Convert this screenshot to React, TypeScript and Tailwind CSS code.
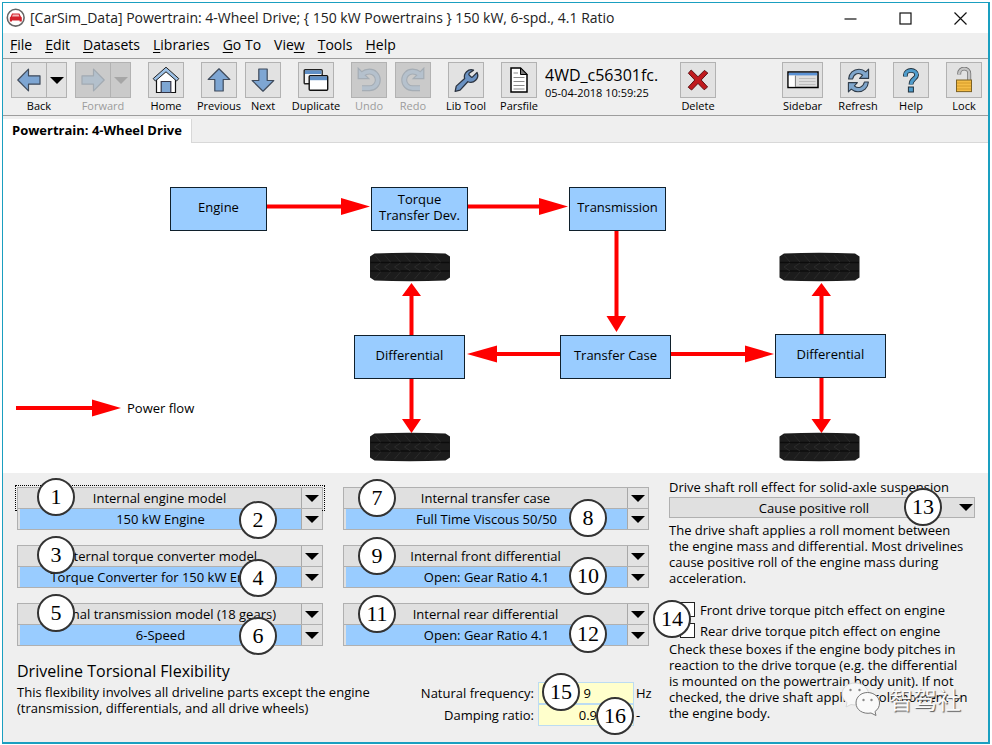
import type { ReactNode } from "react";

const SANS = 'font-["Open_Sans","Noto_Sans",sans-serif]';

const BLUE = "#7ea6d3";
const INK = "#2b3340";

/* ---------- toolbar icons ---------- */

function ArrowIcon({ turn, faded }: { turn: number; faded?: boolean }) {
  return (
    <svg width="24" height="24" viewBox="0 0 24 24" aria-hidden="true">
      <path
        d="M0.8 12 L11.5 1.2 V7.8 H23 V16.2 H11.5 V22.8 Z"
        transform={`rotate(${turn} 12 12)`}
        fill={faded ? "#b3c0cc" : BLUE}
        stroke={faded ? "#a2aab2" : "#3f4b5c"}
        strokeWidth="1.2"
        strokeLinejoin="round"
      />
    </svg>
  );
}

function Triangle({ color = "#000000" }: { color?: string }) {
  return (
    <svg width="14" height="7" viewBox="0 0 14 7" aria-hidden="true">
      <path d="M0 0 H14 L7 7 Z" fill={color} />
    </svg>
  );
}

function HomeIcon() {
  return (
    <svg width="28" height="28" viewBox="0 0 28 28" aria-hidden="true">
      <path d="M4.5 13 V26.5 H23.5 V13 L14 4.5 Z" fill="#fff" stroke="#111" strokeWidth="1.2" />
      <path d="M9.2 26.5 V15.5 H18.8 V26.5 Z" fill={BLUE} stroke="#334" strokeWidth="1.2" />
      <path
        d="M14 1.2 L1.2 12.6 L3.4 15 L14 5.8 L24.6 15 L26.8 12.6 Z"
        fill="#9dc1e6"
        stroke="#222"
        strokeWidth="1"
        strokeLinejoin="round"
      />
    </svg>
  );
}

function DuplicateIcon() {
  return (
    <svg width="26" height="24" viewBox="0 0 26 24" aria-hidden="true">
      <rect x="1.2" y="1.8" width="18" height="14" rx="1" fill="#f4f4f4" stroke="#222" strokeWidth="1.4" />
      <rect x="2" y="2.4" width="16.5" height="3.6" fill="#5f8fc6" />
      <rect x="6.2" y="7.8" width="18.5" height="14.4" rx="1" fill="#fff" stroke="#111" strokeWidth="1.4" />
      <rect x="7" y="8.4" width="17" height="3.8" fill="#5f8fc6" />
    </svg>
  );
}

function TurnIcon({ mirrored }: { mirrored?: boolean }) {
  const arc = "M6.5 7 Q9.5 4.6 13.5 4.6 A8.3 8.3 0 0 1 13.5 21.2 H6";
  return (
    <svg width="26" height="26" viewBox="0 0 26 26" aria-hidden="true">
      <g transform={mirrored ? "translate(26 0) scale(-1 1)" : undefined}>
        <path d={arc} fill="none" stroke="#a5adb5" strokeWidth="6" />
        <path d="M2.2 1.2 V11.6 H12.8 Z" fill="#b5c1cd" stroke="#a5adb5" strokeWidth="1.2" />
        <path d={arc} fill="none" stroke="#b5c1cd" strokeWidth="3.8" />
      </g>
    </svg>
  );
}

function WrenchIcon() {
  return (
    <svg width="28" height="28" viewBox="0 0 24 24" aria-hidden="true">
      <path
        d="M14.7 6.3a1 1 0 0 0 0 1.4l1.6 1.6a1 1 0 0 0 1.4 0l3.77-3.77a6 6 0 0 1-7.94 7.94l-6.6 7.2 -4.2 1 0.9-4.4 7.2-6.5a6 6 0 0 1 7.64-7.24z"
        fill="#6b92c2"
        stroke={INK}
        strokeWidth="1.1"
        strokeLinejoin="round"
      />
    </svg>
  );
}

function FileIcon() {
  return (
    <svg width="18" height="26" viewBox="0 0 18 26" aria-hidden="true">
      <path d="M1 1 H10.5 L17 7.5 V25 H1 Z" fill="#fff" stroke="#000" strokeWidth="1.5" />
      <path d="M10.5 1 L17 7.5 H10.5 Z" fill="#777" stroke="#000" />
      <path d="M3.5 6 H8 M3.5 10.5 H14.5 M3.5 14.5 H14.5 M3.5 18.5 H14.5 M3.5 22 H14.5" stroke="#8b8b8b" />
    </svg>
  );
}

function DeleteIcon() {
  return (
    <svg width="22" height="22" viewBox="0 0 22 22" aria-hidden="true">
      <path
        d="M4.2 1 L11 7.8 L17.4 1.4 L20.8 4 L14.2 11 L20.6 18 L17.2 20.8 L11 14.4 L4.6 21 L1.2 18.2 L7.8 11 L1.4 4.2 Z"
        fill="#c01a1e"
        stroke="#5c1214"
        strokeWidth="1"
        strokeLinejoin="round"
      />
    </svg>
  );
}

function SidebarIcon() {
  return (
    <svg width="32" height="18" viewBox="0 0 32 18" aria-hidden="true">
      <rect x="1" y="1" width="30" height="15.5" fill="#dedede" stroke="#000" strokeWidth="1.5" />
      <rect x="1.8" y="1.8" width="28.4" height="2.6" fill="#5a92d6" />
      <rect x="1.8" y="4.6" width="6.4" height="11" fill="#fff" />
      <path d="M8.4 4.6 V16" stroke="#777" />
      <path d="M12 7.5 H28.5 M12 10.5 H28.5 M12 13.5 H28.5" stroke="#bdbdbd" />
    </svg>
  );
}

function RefreshIcon() {
  const half = "M2.6 11 C3 5.2 7.4 1.2 13 1.2 C15.6 1.2 18 2.2 19.8 3.8 L22.6 1.2 V10.4 H13.6 L16.6 7.2 C13 3.8 7.8 5.6 6.6 11 Z";
  return (
    <svg width="25" height="25" viewBox="0 0 25 25" aria-hidden="true">
      <g fill="#7fa6cc" stroke="#2f3b48" strokeWidth="1.1" strokeLinejoin="round">
        <path d={half} />
        <path d={half} transform="rotate(180 12.5 12.5)" />
      </g>
    </svg>
  );
}

function HelpIcon() {
  const hook = "M3.4 8.4 V7 A5.6 4.6 0 0 1 14.6 7 C14.6 11 9 10.6 9 16.6";
  return (
    <svg width="18" height="25" viewBox="0 0 18 25" aria-hidden="true">
      <path d={hook} fill="none" stroke="#20303c" strokeWidth="4.8" />
      <rect x="6.4" y="19" width="5" height="5" fill="#4f9ccb" stroke="#20303c" />
      <path d={hook} fill="none" stroke="#4f9ccb" strokeWidth="3" />
    </svg>
  );
}

function LockIcon() {
  return (
    <svg width="18" height="26" viewBox="0 0 18 26" aria-hidden="true">
      <path d="M4.2 7.6 V6.4 A5 4.8 0 0 1 14.2 6.4 V14" fill="none" stroke="#777" strokeWidth="4" />
      <path d="M4.2 7.4 V6.4 A5 4.8 0 0 1 14.2 6.4 V14" fill="none" stroke="#c4c4c4" strokeWidth="2.4" />
      <rect x="1.5" y="13" width="15" height="11.6" fill="#f5bd45" stroke="#7d6224" />
      <path d="M2 16 H16 M2 19 H16 M2 22 H16" stroke="#d39a2a" />
    </svg>
  );
}

function AppIcon() {
  return (
    <svg width="20" height="20" viewBox="0 0 20 20" aria-hidden="true">
      <circle cx="9.7" cy="9.7" r="8.4" fill="#fff" stroke="#666" strokeWidth="1.6" />
      <path d="M6 5.6 H13.4 L14.8 8.6 L15.8 9.6 V13.4 H13.6 V12.4 H6 V13.4 H3.8 V9.6 L4.8 8.6 Z" fill="#d3222c" />
      <path d="M6.8 6.6 H12.6 L13.4 8.4 H6 Z" fill="#f3b9bb" />
    </svg>
  );
}

/* ---------- toolbar ---------- */

type ToolProps = { label: string; children: ReactNode; disabled?: boolean; wide?: boolean };

function Tool({ label, children, disabled, wide }: ToolProps) {
  return (
    <button
      type="button"
      disabled={disabled}
      className={`flex flex-col items-center ${wide ? "w-[41px]" : "w-9"} ${disabled ? "text-[#9c9c9c]" : "text-black"}`}
    >
      <span
        className={`flex h-9 w-full items-center justify-center border border-[#b2b2b2] ${disabled ? "bg-[#cacaca]" : "bg-[#e2e2e2]"}`}
      >
        {children}
      </span>
      <span className="whitespace-nowrap text-[11px] leading-4">{label}</span>
    </button>
  );
}

function SplitTool({ label, turn, disabled }: { label: string; turn: number; disabled?: boolean }) {
  const face = disabled ? "bg-[#cacaca]" : "bg-[#e2e2e2]";
  return (
    <div className={`flex flex-col items-center ${disabled ? "text-[#9c9c9c]" : "text-black"}`}>
      <div className={`flex h-9 border border-[#b2b2b2] ${face}`}>
        <button type="button" disabled={disabled} aria-label={label} className="flex w-[34px] items-center justify-center">
          <ArrowIcon turn={turn} faded={disabled} />
        </button>
        <button
          type="button"
          disabled={disabled}
          aria-label={`${label} history`}
          className="flex w-5 items-center justify-center border-l border-[#b2b2b2]"
        >
          <Triangle color={disabled ? "#a6a6a6" : "#000000"} />
        </button>
      </div>
      <span className="text-[11px] leading-4">{label}</span>
    </div>
  );
}

function Toolbar() {
  return (
    <div className="flex h-[58px] items-start gap-[17px] border-y border-[#9d9d9d] bg-[#efefef] pt-[3px] pr-[6px] pl-2">
      <div className="flex gap-2">
        <SplitTool label="Back" turn={0} />
        <SplitTool label="Forward" turn={180} disabled />
      </div>
      <Tool label="Home"><HomeIcon /></Tool>
      <div className="flex gap-2">
        <Tool label="Previous"><ArrowIcon turn={90} /></Tool>
        <Tool label="Next"><ArrowIcon turn={270} /></Tool>
      </div>
      <Tool label="Duplicate"><DuplicateIcon /></Tool>
      <div className="flex gap-2">
        <Tool label="Undo" disabled><TurnIcon /></Tool>
        <Tool label="Redo" disabled><TurnIcon mirrored /></Tool>
      </div>
      <Tool label="Lib Tool"><WrenchIcon /></Tool>
      <div className="flex gap-2">
        <Tool label="Parsfile"><FileIcon /></Tool>
        <div className="w-[118px] whitespace-nowrap pt-[3px]">
          <p className="text-[16px] leading-5">4WD_c56301fc.</p>
          <p className="text-[11px] leading-4">05-04-2018 10:59:25</p>
        </div>
      </div>
      <Tool label="Delete"><DeleteIcon /></Tool>
      <div className="ml-auto flex gap-[17px]">
        <Tool label="Sidebar" wide><SidebarIcon /></Tool>
        <Tool label="Refresh"><RefreshIcon /></Tool>
        <Tool label="Help"><HelpIcon /></Tool>
        <Tool label="Lock"><LockIcon /></Tool>
      </div>
    </div>
  );
}

/* ---------- title bar and menu ---------- */

function TitleBar() {
  return (
    <header className="flex h-[30px] items-center gap-1 bg-white pl-[3px]">
      <AppIcon />
      <h1 className="flex-1 whitespace-nowrap text-[14px] leading-5 text-[#222]">
        [CarSim_Data] Powertrain: 4-Wheel Drive; {"{ 150 kW Powertrains }"} 150 kW, 6-spd., 4.1 Ratio
      </h1>
      <div className="flex">
        <button type="button" aria-label="Minimize" className="flex w-[55px] justify-center">
          <svg width="13" height="13" viewBox="0 0 13 13"><path d="M0.5 7 H12.5" stroke="#111" strokeWidth="1.2" /></svg>
        </button>
        <button type="button" aria-label="Maximize" className="flex w-[55px] justify-center">
          <svg width="13" height="13" viewBox="0 0 13 13"><rect x="1" y="1" width="11" height="11" fill="none" stroke="#111" strokeWidth="1.2" /></svg>
        </button>
        <button type="button" aria-label="Close" className="flex w-[55px] justify-center">
          <svg width="13" height="13" viewBox="0 0 13 13"><path d="M0.5 0.5 L12.5 12.5 M12.5 0.5 L0.5 12.5" stroke="#111" strokeWidth="1.2" /></svg>
        </button>
      </div>
    </header>
  );
}

const MENUS: [string, string, string][] = [
  ["", "F", "ile"],
  ["", "E", "dit"],
  ["", "D", "atasets"],
  ["", "L", "ibraries"],
  ["", "G", "o To"],
  ["Vie", "w", ""],
  ["", "T", "ools"],
  ["", "H", "elp"],
];

function MenuBar() {
  return (
    <nav className="flex h-[25px] items-center gap-[13px] bg-[#efefef] pb-[2px] pl-[7px] text-[14px] leading-5">
      {MENUS.map(([before, key, after]) => (
        <button type="button" key={before + key + after} className="whitespace-nowrap">
          {before}
          <span className="underline underline-offset-2">{key}</span>
          {after}
        </button>
      ))}
    </nav>
  );
}

/* ---------- drivetrain diagram ---------- */

function Tire({ x, y }: { x: number; y: number }) {
  return (
    <g transform={`translate(${x} ${y})`}>
      <path d="M5 0.5 Q40 -0.8 76 0.5 L80.5 3.5 V24.5 L76 27.5 Q40 28.8 5 27.5 L0.5 24.5 V3.5 Z" fill="#1c1c1c" />
      <path d="M1 9.5 H80 M1 18 H80" stroke="#0c0c0c" strokeWidth="1.3" />
      <path
        d="M5 2 l6 7 M15 2 l6 7 M25 2 l6 7 M35 2 l6 7 M45 2 l6 7 M55 2 l6 7 M65 2 l6 7 M11 10 l-6 4 6 4 M21 10 l-6 4 6 4 M31 10 l-6 4 6 4 M41 10 l-6 4 6 4 M51 10 l-6 4 6 4 M61 10 l-6 4 6 4 M71 10 l-6 4 6 4 M11 19 l-6 7 M21 19 l-6 7 M31 19 l-6 7 M41 19 l-6 7 M51 19 l-6 7 M61 19 l-6 7 M71 19 l-6 7"
        fill="none"
        stroke="#303030"
        strokeWidth="0.8"
      />
    </g>
  );
}

function Node({ place, children }: { place: string; children: ReactNode }) {
  return (
    <div
      className={`absolute flex h-11 items-center justify-center border border-[#10202c] bg-[#99ccff] pb-1 text-center text-[13px] leading-4 whitespace-pre ${place}`}
    >
      {children}
    </div>
  );
}

function Diagram() {
  return (
    <section aria-label="Powertrain layout" className="relative h-[330px] bg-white">
      <svg className="absolute top-0 left-0" width="980" height="330" viewBox="3 143 980 330" aria-hidden="true">
        <g stroke="#ff0000" strokeWidth="4">
          <path d="M266 206.500 H345 M467 206.500 H543 M616.500 230 V318 M560 354 H495 M671 354 H748 M16 408 H95" />
          <path d="M411.500 294 V421 M821.500 294 V421" />
        </g>
        <g fill="#ff0000">
          <path d="M341 198 L370 206.500 L341 215 Z" />
          <path d="M539 198 L568 206.500 L539 215 Z" />
          <path d="M606.500 316 H626 L616.500 332 Z" />
          <path d="M497 345.500 L467 354 L497 362.500 Z" />
          <path d="M745 345.500 L774 354 L745 362.500 Z" />
          <path d="M92 399.500 L121 408 L92 416.500 Z" />
          <path d="M402 296 L411.500 283 L421 296 Z M402 419 L411.500 433 L421 419 Z" />
          <path d="M811.500 296 L821.500 283 L831 296 Z M811.500 419 L821.500 433 L831 419 Z" />
        </g>
        <Tire x={369.5} y={253} />
        <Tire x={779} y={253} />
        <Tire x={369.5} y={433} />
        <Tire x={779} y={433} />
      </svg>
      <Node place="left-[167px] top-11 w-[97px]">Engine</Node>
      <Node place="left-[368px] top-11 w-[97px]">{"Torque\nTransfer Dev."}</Node>
      <Node place="left-[566px] top-11 w-[97px]">Transmission</Node>
      <Node place="left-[351px] top-48 w-[111px]">Differential</Node>
      <Node place="left-[557px] top-48 w-[111px]">Transfer Case</Node>
      <Node place="left-[772px] top-[191px] w-[111px]">Differential</Node>
      <p className="absolute top-[257px] left-[124px] text-[13px] leading-4">Power flow</p>
    </section>
  );
}

/* ---------- parameter panel ---------- */

function Callout({ n, place }: { n: number; place: string }) {
  return (
    <span
      className={`pointer-events-none absolute z-10 flex h-[38px] w-[38px] items-center justify-center rounded-full border-2 border-[#333] bg-white font-["Liberation_Serif",serif] text-[22px] leading-none text-black ${place}`}
    >
      {n}
    </span>
  );
}

function DropCell() {
  return (
    <span className="pointer-events-none absolute inset-y-0 right-0 flex w-[21px] items-center justify-center border-l border-[#a8a8a8] bg-[#e2e2e2]">
      <Triangle />
    </span>
  );
}

type PickerProps = { name: string; model: string; dataset: string; marks: [number, number]; right?: boolean; focused?: boolean };

function Picker({ name, model, dataset, marks, right, focused }: PickerProps) {
  const select = "h-full w-full appearance-none pr-[21px] text-center text-[13px] outline-none [text-align-last:center]";
  return (
    <div className="relative">
      <div className="border border-[#b0b0b0]">
        <div className={`relative h-5 ${focused ? "outline-1 outline-offset-2 outline-dotted outline-black" : ""}`}>
          <select aria-label={`${name} model`} className={`${select} bg-[#e0e0e0]`}>
            <option>{model}</option>
          </select>
          <DropCell />
        </div>
        <div className="relative h-[21px] border-t border-[#b0b0b0]">
          <select aria-label={`${name} dataset`} className={`${select} border-l-2 border-[#e0e0e0] bg-[#99ccff]`}>
            <option>{dataset}</option>
          </select>
          <DropCell />
        </div>
      </div>
      <Callout n={marks[0]} place={right ? "left-[15px] -top-2" : "left-5 -top-[9px]"} />
      <Callout n={marks[1]} place={right ? "left-[226px] top-3" : "left-[222px] top-[14px]"} />
    </div>
  );
}

function NumberRow({ id, label, value, unit, inset }: { id: string; label: string; value: string; unit: string; inset: string }) {
  return (
    <div className="flex items-center">
      <label htmlFor={id} className="flex-1 pr-1 text-right whitespace-nowrap">{label}</label>
      <input
        id={id}
        defaultValue={value}
        className={`h-[22px] w-24 border border-[#bcdcf2] bg-[#ffffcc] text-right outline-none ${inset}`}
      />
      <span className="w-[15px] pl-[2px]">{unit}</span>
    </div>
  );
}

function LeftPanel() {
  return (
    <div className="min-w-0 flex-1">
      <div className="grid grid-cols-2 gap-x-5 gap-y-[15px]">
        <Picker name="Engine" model="Internal engine model" dataset="150 kW Engine" marks={[1, 2]} focused />
        <Picker name="Transfer case" model="Internal transfer case" dataset="Full Time Viscous 50/50" marks={[7, 8]} right />
        <Picker name="Torque converter" model="Internal torque converter model" dataset="Torque Converter for 150 kW Engine" marks={[3, 4]} />
        <Picker name="Front differential" model="Internal front differential" dataset="Open: Gear Ratio 4.1" marks={[9, 10]} right />
        <Picker name="Transmission" model="Internal transmission model (18 gears)" dataset="6-Speed" marks={[5, 6]} />
        <Picker name="Rear differential" model="Internal rear differential" dataset="Open: Gear Ratio 4.1" marks={[11, 12]} right />
      </div>
      <div className="flex justify-between pt-[15px]">
        <div className="whitespace-nowrap">
          <h2 className="text-[16px] leading-5">Driveline Torsional Flexibility</h2>
          <p className="pt-[3px]">
            This flexibility involves all driveline parts except the engine
            <br />
            (transmission, differentials, and all drive wheels)
          </p>
        </div>
        <div className="relative w-[230px] pt-[21px]">
          <NumberRow id="natural-frequency" label="Natural frequency:" value="9" unit="Hz" inset="pr-[42px]" />
          <NumberRow id="damping-ratio" label="Damping ratio:" value="0.9" unit="-" inset="pr-9" />
          <Callout n={15} place="right-[69px] top-3" />
          <Callout n={16} place="right-[15px] top-9" />
        </div>
      </div>
    </div>
  );
}

function WatermarkLogo() {
  return (
    <svg width="40" height="34" viewBox="0 0 40 34" aria-hidden="true">
      <path
        d="M14 1 C6.500 1 1 6 1 12 C1 15.500 3 18.500 6 20.500 L5 25 L10 22.500 C18 24.500 27.500 20 27.500 12 C27.500 6 21.500 1 14 1 Z"
        fill="#f8f8f8"
        stroke="#d8d8d8"
      />
      <path
        d="M26.500 10.500 C20 10.500 15 15 15 21 C15 28 22 32.500 30 31 L35 33.500 L34 29.500 C37 27.500 38.500 24.500 38.500 21 C38.500 15 33 10.500 26.500 10.500 Z"
        fill="#fafafa"
        stroke="#777"
      />
      <g fill="#8a8a8a">
        <circle cx="9.500" cy="8" r="1.200" />
        <circle cx="18.500" cy="8" r="1.200" />
        <circle cx="22.500" cy="18" r="1.200" />
        <circle cx="30.500" cy="18" r="1.200" />
      </g>
    </svg>
  );
}

function CheckRow({ id, label }: { id: string; label: string }) {
  return (
    <div className="flex h-[21px] items-center gap-[5px] pl-[11px]">
      <input id={id} type="checkbox" className="h-[15px] w-[15px] appearance-none border border-[#222] bg-white" />
      <label htmlFor={id} className="whitespace-nowrap">{label}</label>
    </div>
  );
}

function RightPanel() {
  return (
    <div className="relative w-[306px] shrink-0">
      <label htmlFor="roll-effect" className="-mt-2 block whitespace-nowrap">
        Drive shaft roll effect for solid-axle suspension
      </label>
      <div className="relative mt-[2px] h-[21px]">
        <select
          id="roll-effect"
          className="h-full w-full appearance-none border border-[#b0b0b0] bg-[#e0e0e0] pr-4 text-center outline-none [text-align-last:center]"
        >
          <option>Cause positive roll</option>
        </select>
        <span className="pointer-events-none absolute inset-y-0 right-[2px] flex items-center">
          <Triangle />
        </span>
      </div>
      <p className="mt-1 whitespace-nowrap">
        The drive shaft applies a roll moment between
        <br />
        the engine mass and differential. Most drivelines
        <br />
        cause positive roll of the engine mass during
        <br />
        acceleration.
      </p>
      <div className="mt-[13px]">
        <CheckRow id="front-pitch" label="Front drive torque pitch effect on engine" />
        <CheckRow id="rear-pitch" label="Rear drive torque pitch effect on engine" />
      </div>
      <p className="whitespace-nowrap">
        Check these boxes if the engine body pitches in
        <br />
        reaction to the drive torque (e.g. the differential
        <br />
        is mounted on the powertrain body unit). If not
        <br />
        checked, the drive shaft applies a roll moment on
        <br />
        the engine body.
      </p>
      <Callout n={13} place="right-[33px] top-px" />
      <Callout n={14} place="-left-4 top-[113px]" />
      <div className="pointer-events-none absolute top-[195px] right-[14px] flex items-center gap-2">
        <WatermarkLogo />
        <span className='font-["Noto_Sans_CJK_SC",sans-serif] text-[24px] leading-8 text-[#fafafa] [text-shadow:1px_1px_1px_#555]'>
          智驾社
        </span>
      </div>
    </div>
  );
}

export default function App() {
  return (
    <div className={`min-h-screen bg-white px-[2px] py-[2px] text-black ${SANS}`}>
      <main className="flex min-h-[742px] flex-col border border-r-2 border-b-2 border-[#1a9fc0]">
        <TitleBar />
        <MenuBar />
        <Toolbar />
        <div className="flex h-[27px] items-end bg-[#efefef]">
          <div role="tab" aria-selected="true" className="flex h-6 items-center bg-white px-[9px] text-[13px] font-bold whitespace-nowrap">
            Powertrain: 4-Wheel Drive
          </div>
          <div className="h-6 flex-1 border-b border-l border-[#d8d8d8]" />
        </div>
        <Diagram />
        <div className="flex flex-1 gap-5 bg-[#efefef] pt-[14px] pr-[13px] pl-[14px] text-[13px] leading-4">
          <LeftPanel />
          <RightPanel />
        </div>
      </main>
    </div>
  );
}
